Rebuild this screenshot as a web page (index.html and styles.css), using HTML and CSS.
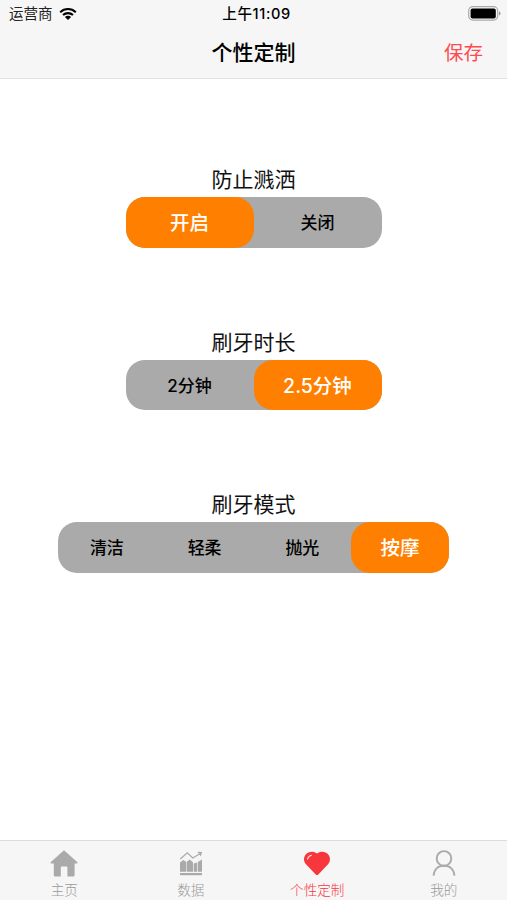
FILE: index.html
```html
<!DOCTYPE html>
<html lang="zh-CN">
<head>
    <meta charset="UTF-8">
    <meta name="viewport" content="width=device-width, initial-scale=1.0">
    <title>个性定制</title>
    <link rel="stylesheet" href="styles.css">
</head>
<body>

    <header class="header">
        <div class="status-bar">
            <div class="carrier">
                <span>运营商</span>
                <svg class="wifi" width="18" height="14" viewBox="0 0 18 14">
                    <path d="M1.2 5.2C5.6 1 12.4 1 16.8 5.2M4 8.1C6.9 5.4 11.1 5.4 14 8.1" fill="none" stroke="#000" stroke-width="2.1"/>
                    <path d="M9 13L5.9 10C7.7 8.4 10.3 8.4 12.1 10Z" fill="#000"/>
                </svg>
            </div>
            <div class="time">上午11:09</div>
            <div class="battery">
                <svg width="33" height="15" viewBox="0 0 33 15">
                    <rect x="0.7" y="0.7" width="29" height="13.4" rx="4" fill="none" stroke="#aaa" stroke-width="1.2"/>
                    <rect x="2.6" y="2.4" width="25.2" height="10" rx="2" fill="#000"/>
                    <path d="M31 5.2Q32.6 6 32.6 7.4T31 9.6Z" fill="#999"/>
                </svg>
            </div>
        </div>
        <div class="nav-bar">
            <h1>个性定制</h1>
            <a class="save">保存</a>
        </div>
    </header>

    <main class="content">
        <section class="setting">
            <h2>防止溅洒</h2>
            <div class="segment">
                <div class="option active">开启</div>
                <div class="option">关闭</div>
            </div>
        </section>
        <section class="setting">
            <h2>刷牙时长</h2>
            <div class="segment">
                <div class="option">2分钟</div>
                <div class="option active">2.5分钟</div>
            </div>
        </section>
        <section class="setting">
            <h2>刷牙模式</h2>
            <div class="segment wide">
                <div class="option">清洁</div>
                <div class="option">轻柔</div>
                <div class="option">抛光</div>
                <div class="option active">按摩</div>
            </div>
        </section>
    </main>

    <nav class="tab-bar">
        <a class="tab">
            <svg width="28" height="28" viewBox="0 0 28 28">
                <path d="M14 0.2L27.5 12.3Q28 13.4 26.6 13.4H24.6V25.2Q24.6 26.6 23.2 26.6H17.4V17.4Q17.4 16.4 16.4 16.4H11.8Q10.8 16.4 10.8 17.4V26.6H5.2Q3.8 26.6 3.8 25.2V13.4H1.4Q0 13.4 0.6 12.3Z" fill="#aaa"/>
            </svg>
            <span>主页</span>
        </a>
        <a class="tab">
            <svg width="28" height="28" viewBox="0 0 28 28">
                <path d="M3.3 9L10.3 2.8L15.8 8L24 3M20.8 2.4L24.4 2.6L23.4 5.8" fill="none" stroke="#aaa" stroke-width="1.2"/>
                <path d="M3 12.6L6.2 10L9.4 12V21.8H3ZM10 11.4L13 9.6L16 12.4V21.8H10ZM16.7 13.4L20.2 12.4V21.8H16.7ZM20.9 12L25 9.6V21.8H20.9Z" fill="#aaa"/>
                <path d="M3 23H25V25.2H3Z" fill="#aaa"/>
            </svg>
            <span>数据</span>
        </a>
        <a class="tab active">
            <svg width="28" height="28" viewBox="0 0 28 28">
                <path d="M14 3.6C17.2 1 21.7 1.1 24.6 3.8C27.7 6.9 27.8 11.4 24.8 14.6L15.3 24.4Q14 25.8 12.7 24.4L3.2 14.6C0.2 11.4 0.3 6.9 3.4 3.8C6.3 1.1 10.8 1 14 3.6Z" fill="#f8373d"/>
                <path d="M4.6 9.2Q5.2 6 8.4 5.2" fill="none" stroke="#fdd" stroke-width="1.1" stroke-linecap="round"/>
            </svg>
            <span>个性定制</span>
        </a>
        <a class="tab">
            <svg width="28" height="28" viewBox="0 0 28 28">
                <circle cx="14" cy="8.4" r="7.3" fill="none" stroke="#aaa" stroke-width="1.9"/>
                <path d="M3.6 25.6C4 19.4 8 15.7 14 15.7S24 19.4 24.4 25.6" fill="none" stroke="#aaa" stroke-width="1.9"/>
            </svg>
            <span>我的</span>
        </a>
    </nav>

</body>
</html>
```
FILE: styles.css
```css
* {
    box-sizing: border-box;
}

body {
    font-family: Inter, "Noto Sans CJK SC", sans-serif;
    display: flex;
    flex-direction: column;
    height: 900px;
    margin: 0;
    background-color: white;
    color: black;
    overflow: hidden;
}

.header {
    height: 79px;
    background-color: #f6f6f6;
    border-bottom: 1px solid #e2e2e2;
}

.status-bar, .nav-bar {
    display: grid;
    grid-template-columns: 1fr auto 1fr;
    align-items: center;
}

.status-bar {
    height: 28px;
    padding: 0 6px 0 9px;
    font-size: 14.5px;
    line-height: 28px;
}

.carrier {
    display: flex;
    align-items: center;
    gap: 6px;
    color: #222;
}

.wifi {
    margin-top: -1px;
}

.time {
    font-weight: 500;
    padding-left: 3px;
    font-size: 14.6px;
    letter-spacing: 0.6px;
}

.battery {
    display: flex;
    justify-content: flex-end;
    margin-top: -2px;
}

.nav-bar {
    height: 50px;
    padding: 0 24px;
}

.nav-bar h1 {
    grid-column: 2;
    margin: 0;
    font-size: 21px;
    font-weight: 500;
    line-height: 50px;
}

.save {
    text-align: right;
    font-size: 19.5px;
    line-height: 46px;
    padding-bottom: 1px;
    color: #ff4a50;
}

.content {
    flex: 1;
    display: flex;
    flex-direction: column;
    align-items: center;
    gap: 80px;
    padding-top: 86px;
}

.setting {
    display: flex;
    flex-direction: column;
    align-items: center;
}

.setting h2 {
    margin: 0;
    padding-bottom: 2px;
    font-size: 21px;
    font-weight: 400;
    line-height: 30px;
    color: #111;
}

.segment {
    display: flex;
    width: 256px;
    height: 50.5px;
    border-radius: 19px;
    background-color: #aaa;
}

.segment.wide {
    width: 391px;
}

.option {
    flex: 1;
    display: flex;
    align-items: center;
    justify-content: center;
    padding-bottom: 1px;
    font-size: 17px;
    font-weight: 500;
}

.option.active {
    border-radius: 19px;
    background-color: #ff8000;
    color: white;
    font-size: 19.5px;
}

.tab-bar {
    display: flex;
    height: 60px;
    padding-left: 1px;
    background-color: #f6f6f6;
    border-top: 1px solid #dcdcdc;
}

.tab {
    flex: 1;
    display: flex;
    flex-direction: column;
    align-items: center;
    padding-top: 9px;
    font-size: 13.6px;
    font-weight: 300;
    line-height: 24px;
    color: #999;
}

.tab svg {
    flex-shrink: 0;
}

.tab.active {
    color: #f8373d;
}
```
